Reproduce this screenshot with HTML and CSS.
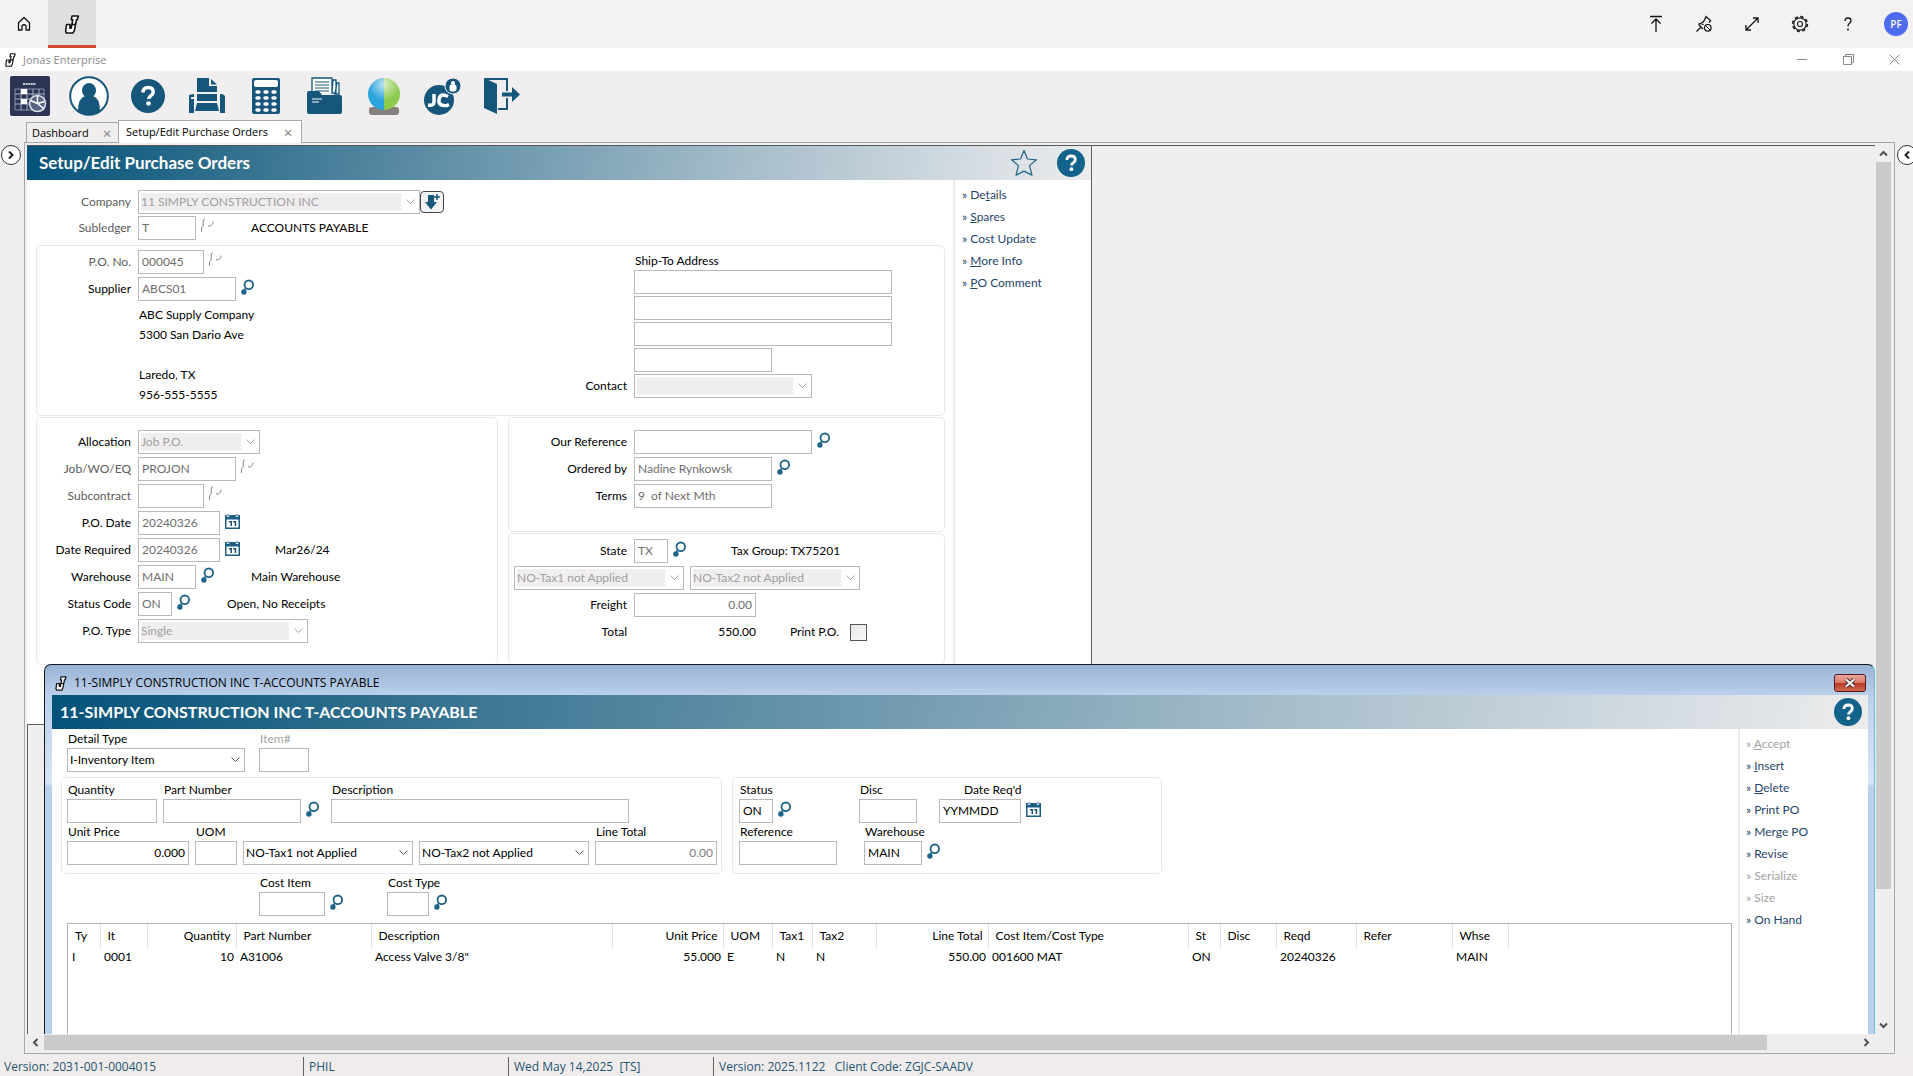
FILE: index.html
```html
<!DOCTYPE html>
<html lang="en">
<head>
<meta charset="utf-8">
<title>Jonas Enterprise</title>
<link rel="stylesheet" href="styles.css">
</head>
<body>
<svg class="defs" aria-hidden="true">
  <symbol id="jonas" viewBox="0 0 14 18"><path d="M7 1h6l-1 3.500h-.8L9.300 14.500 8 17H1.500L1 15.500 1.800 9h3.400L5 12.500h1.200L7.800 4.500H6.300z" fill="#fff" stroke="#111" stroke-width="1.500" stroke-linejoin="round"/><path d="M7 9h3.500" stroke="#111" stroke-width="1.500"/></symbol>
  <symbol id="find" viewBox="0 0 13 16"><circle cx="7.800" cy="5.800" r="4.300" fill="none" stroke="#1d6488" stroke-width="1.800"/><path d="M4.500 9.500 3.200 11" stroke="#1d6488" stroke-width="1.600"/><circle cx="2.900" cy="13" r="2.700" fill="#1d6488"/></symbol>
  <symbol id="nofind" viewBox="0 0 13 16"><path d="M4 1Q2.200.8 2.200 3v5L.5 9.800V14M12 3.500v2L9.500 7.800H7" fill="none" stroke="#8a8a8a" stroke-width="1"/></symbol>
  <symbol id="cal" viewBox="0 0 15 15"><path d="M0 1h15v14H0z" fill="#1d5f83"/><path d="M1.500 5.500h12V13.500h-12z" fill="#fff"/><path d="M3 0v3M12 0v3" stroke="#fff" stroke-width="2.400"/><path d="M3 0v2.500M12 0v2.500" stroke="#1d5f83" stroke-width="1"/><path d="M4 7h3v5H5.500V8.500H4zM8.200 7h3v5H9.700V8.500H8.200z" fill="#1d4f6e"/></symbol>
  <symbol id="help" viewBox="0 0 34 34"><circle cx="17" cy="17" r="17" fill="currentColor"/><path d="M12 13.500q0-5 5.200-5 5 0 5 4.300 0 2.400-2.300 3.900-2.300 1.400-2.300 3.300" fill="none" stroke="#fff" stroke-width="3.400"/><circle cx="17.500" cy="24.500" r="2.300" fill="#fff"/></symbol>
</svg>

<header class="host">
  <nav class="host-tabs">
    <button class="host-tab" aria-label="Home"><svg width="14" height="16" viewBox="0 0 14 16"><path d="M1.500 6.800 7 1.500l5.500 5.300V14H9V9.500q-2-1.500-4 0V14H1.500z" fill="none" stroke="#111" stroke-width="1.300" stroke-linejoin="round"/></svg></button>
    <button class="host-tab current" aria-label="Jonas"><svg width="16" height="19"><use href="#jonas"/></svg></button>
  </nav>
  <div class="host-tools">
    <button aria-label="Upload"><svg width="16" height="18" viewBox="0 0 16 18"><path d="M2 1.500h12M8 17V4M3.500 8.500 8 4l4.500 4.500" fill="none" stroke="#111" stroke-width="1.300"/></svg></button>
    <button aria-label="Unpin"><svg width="18" height="18" viewBox="0 0 18 18"><path d="M1.500 16.500 6 12M3.500 9.500q2.500-2 5 .2M3.500 9.500 8 14M5.500 8.500Q8.500 7.500 9.500 5l1.500-3.500 4.500 4-1.500 2" fill="none" stroke="#111" stroke-width="1.300"/><circle cx="12.800" cy="12.800" r="3.300" fill="none" stroke="#111" stroke-width="1.200"/><path d="m10.500 10.500 4.600 4.600" stroke="#111"/></svg></button>
    <button aria-label="Expand"><svg width="16" height="16" viewBox="0 0 16 16"><path d="m2 14 12-12M9 2h5v5M2 9v5h5" fill="none" stroke="#111" stroke-width="1.300"/></svg></button>
    <button aria-label="Settings"><svg width="18" height="18" viewBox="0 0 18 18"><circle cx="9" cy="9" r="7.300" fill="none" stroke="#222" stroke-width="1.800" stroke-dasharray="3.300 2.430"/><circle cx="9" cy="9" r="6.200" fill="none" stroke="#222" stroke-width="1.200"/><circle cx="9" cy="9" r="2.500" fill="none" stroke="#222" stroke-width="1.200"/></svg></button>
    <button aria-label="Help"><svg width="10" height="14" viewBox="0 0 10 14"><path d="M2 4q0-3 3-3t3 2.700Q8 5.500 6 6.700 5 7.500 5 9.500" fill="none" stroke="#111" stroke-width="1.300"/><circle cx="5" cy="12.500" r=".9"/></svg></button>
    <button class="avatar">PF</button>
  </div>
</header>

<div class="titlebar">
  <svg width="11" height="14"><use href="#jonas"/></svg>
  <span>Jonas Enterprise</span>
  <div class="wincontrols">
    <button aria-label="Minimize"><svg width="11" height="11" viewBox="0 0 11 11"><path d="M0 5.500h10" stroke="#888"/></svg></button>
    <button aria-label="Restore"><svg width="11" height="11" viewBox="0 0 11 11"><path d="M.5 2.500h8v8h-8zM2.500 2.500v-2h8v8h-2" fill="none" stroke="#888"/></svg></button>
    <button aria-label="Close"><svg width="11" height="11" viewBox="0 0 11 11"><path d="m.5.5 10 10M10.500.5l-10 10" stroke="#888"/></svg></button>
  </div>
</div>

<div class="toolbar">
  <button aria-label="Dashboard"><svg width="40" height="40" viewBox="0 0 40 40"><rect width="40" height="40" rx="2" fill="#2b3453"/><path d="M13 8h13" stroke="#c9cfdd" stroke-width="2" stroke-dasharray="2 .6"/><path d="M5 13h29v21H5z" fill="none" stroke="#8490ad"/><path d="M5 18h29M5 23h29M5 28h29M11 13v21M17 13v21M23 13v21M29 13v21" stroke="#a9b2c8"/><path d="M11 13h6v5h-6zM11 23h6v5h-6z" fill="#fff"/><circle cx="27.500" cy="27.500" r="8" fill="#5a6684" stroke="#dfe4ee" stroke-width="1.500"/><path d="M27.500 27.500V20M27.500 27.500l-7-3M27.500 27.500l6 5M27.500 27.500l7-2" stroke="#fff" stroke-width="1.500"/></svg></button>
  <button aria-label="User"><svg width="40" height="40" viewBox="0 0 40 40"><circle cx="20" cy="20" r="18.800" fill="#fff" stroke="#15567a" stroke-width="2"/><ellipse cx="20" cy="14.500" rx="7" ry="7.500" fill="#15567a"/><path d="M9 35q0-13 7-15h8q7 2 7 15-5 4-11 4T9 35z" fill="#15567a"/></svg></button>
  <button aria-label="Help"><svg width="34" height="34" color="#15567a"><use href="#help"/></svg></button>
  <button aria-label="Print"><svg width="36" height="36" viewBox="0 0 36 36"><path d="M8 0h12v8h8v6H8zM22 1l6 5.500h-6zM8 16h20v7H8zM0 17l5-1v3H2v2h3v14H0zM31 16q5 0 5 3v16h-5zM8 25h20l2 8H6z" fill="#15567a"/></svg></button>
  <button aria-label="Calculator"><svg width="28" height="36" viewBox="0 0 28 36"><rect width="28" height="36" rx="2" fill="#15567a"/><rect x="2" y="2" width="24" height="7" rx="2" fill="#fff"/><path d="M5 14h2M5 20h2M5 26h2M5 32h2M13 14h2M13 20h2M13 26h2M13 32h2M21 14h2M21 20h2M21 26h2M21 32h2" stroke="#fff" stroke-linecap="round" stroke-width="3.400"/></svg></button>
  <button aria-label="Documents"><svg width="36" height="38" viewBox="0 0 36 38"><path d="M30 6h2v11h-4zM26 3h3v13h-4zM5 16V1h20v15" fill="#fff" stroke="#15567a" stroke-width="1.300"/><path d="M8 5h14M8 8h14M8 11h14M8 14h14" stroke="#15567a"/><path d="M2 14h10l3 4h18q2 0 2 2v15q0 2-2 2H2q-2 0-2-2V16q0-2 2-2z" fill="#15567a"/><path d="M5 22h10M5 25h7" stroke="#fff" stroke-width="1.200"/></svg></button>
  <button aria-label="Web"><svg width="34" height="38" viewBox="0 0 34 38"><defs><radialGradient id="globe" cx=".5" cy=".2"><stop offset="0" stop-color="#fff" stop-opacity=".7"/><stop offset="1" stop-color="#fff" stop-opacity="0"/></radialGradient></defs><rect x="2" y="30" width="30" height="8" rx="3" fill="#85807e"/><path d="M17 1a16 16 0 0 0 0 32z" fill="#2ba3dc"/><path d="M17 1a16 16 0 0 1 0 32z" fill="#8ccb4d"/><circle cx="17" cy="17" r="16" fill="url(#globe)"/></svg></button>
  <button aria-label="Job costing"><svg width="38" height="38" viewBox="0 0 38 38"><circle cx="15" cy="23" r="15" fill="#15567a"/><path d="M10 17v8q0 4-6 3M24 19.500q-8-4-9 3t8 6l2-1" fill="none" stroke="#fff" stroke-width="3.500"/><circle cx="29" cy="9" r="8" fill="#15567a" stroke="#f0eeef"/><circle cx="29" cy="6" r="2" fill="#fff"/><rect x="25.500" y="7.500" width="7" height="7" rx="2" fill="#fff"/></svg></button>
  <button aria-label="Exit"><svg width="36" height="36" viewBox="0 0 36 36"><path d="M1 1h22v12M23 20v11h-9" fill="none" stroke="#15567a" stroke-width="2"/><path d="m0 0 13 6v30L0 30z" fill="#15567a"/><path d="M18 14.500h10V9l8 7.500-8 7.500v-5.500H18z" fill="#15567a"/></svg></button>
</div>

<div class="doc-tabs">
  <div class="doc-tab"><a href="#">Dashboard</a><button aria-label="Close Dashboard">×</button></div>
  <div class="doc-tab active"><a href="#">Setup/Edit Purchase Orders</a><button aria-label="Close Purchase Orders">×</button></div>
</div>

<main class="workspace">
  <div class="gutter"><button class="fold" aria-label="Show left panel"><svg width="8" height="8" viewBox="0 0 8 8"><path d="m2 .5 3.500 3.500L2 7.500" fill="none" stroke="#222" stroke-width="2"/></svg></button></div>
  <div class="client">
    <div class="desktop">

      <section class="window po">
        <div class="banner">
          <h1>Setup/Edit Purchase Orders</h1>
          <button aria-label="Favourite"><svg width="28" height="28" viewBox="0 0 28 28"><path d="M14 1.500 17.500 10l9 .8-7 5.800 2.500 9.500-8-4-8 4 2.500-9.500-7-5.800 9-.8z" fill="none" stroke="#1d6488" stroke-width="1.200" stroke-linejoin="round"/></svg></button>
          <button aria-label="Help"><svg width="28" height="28" color="#11638c"><use href="#help"/></svg></button>
        </div>
        <div class="window-body">
          <div class="po-form">
            <div class="rows top-rows">
              <div class="row dim"><label for="company">Company</label><select id="company" class="w282" disabled><option>11 SIMPLY CONSTRUCTION INC</option></select><button class="add" aria-label="Add company"><svg width="16" height="16" viewBox="0 0 16 16"><path d="M4 1h6v7h3l-6 7.500L1 8h3z" fill="#15567a"/><path d="M13 0v6M10 3h6" stroke="#15567a" stroke-width="1.500"/></svg></button></div>
              <div class="row dim"><label for="subledger">Subledger</label><input id="subledger" class="w58" value="T"><span class="pick"><svg><use href="#nofind"/></svg></span><output>ACCOUNTS PAYABLE</output></div>
            </div>

            <div class="group ship">
              <div class="rows left">
                <div class="row dim"><label for="pono">P.O. No.</label><input id="pono" class="w66" value="000045"><span class="pick"><svg><use href="#nofind"/></svg></span></div>
                <div class="row"><label for="supplier">Supplier</label><input id="supplier" class="w98" value="ABCS01"><button class="pick" aria-label="Find supplier"><svg><use href="#find"/></svg></button></div>
                <address>ABC Supply Company<br>5300 San Dario Ave<br><br>Laredo, TX<br>956-555-5555</address>
              </div>
              <div class="rows right ship-rows">
                <label class="ship-label" for="ship1">Ship-To Address</label>
                <div class="row"><label></label><input id="ship1" class="w258"></div>
                <div class="row"><label></label><input aria-label="Ship-to line 2" class="w258"></div>
                <div class="row"><label></label><input aria-label="Ship-to line 3" class="w258"></div>
                <div class="row"><label></label><input aria-label="Ship-to line 4" class="w138"></div>
                <div class="row"><label for="contact">Contact</label><select id="contact" class="w178" disabled><option></option></select></div>
              </div>
            </div>

            <div class="halves">
              <div class="group rows left tall">
                <div class="row"><label for="alloc">Allocation</label><select id="alloc" class="w122" disabled><option>Job P.O.</option></select></div>
                <div class="row dim"><label for="job">Job/WO/EQ</label><input id="job" class="w98" value="PROJON"><span class="pick"><svg><use href="#nofind"/></svg></span></div>
                <div class="row dim"><label for="subc">Subcontract</label><input id="subc" class="w66"><span class="pick"><svg><use href="#nofind"/></svg></span></div>
                <div class="row"><label for="podate">P.O. Date</label><input id="podate" class="w82" value="20240326"><button class="pick" aria-label="Pick P.O. date"><svg class="cal"><use href="#cal"/></svg></button></div>
                <div class="row"><label for="reqdate">Date Required</label><input id="reqdate" class="w82" value="20240326"><button class="pick" aria-label="Pick required date"><svg class="cal"><use href="#cal"/></svg></button><output>Mar26/24</output></div>
                <div class="row"><label for="whse">Warehouse</label><input id="whse" class="w58" value="MAIN"><button class="pick" aria-label="Find warehouse"><svg><use href="#find"/></svg></button><output>Main Warehouse</output></div>
                <div class="row"><label for="status">Status Code</label><input id="status" class="w34" value="ON"><button class="pick" aria-label="Find status"><svg><use href="#find"/></svg></button><output>Open, No Receipts</output></div>
                <div class="row"><label for="potype">P.O. Type</label><select id="potype" class="w170" disabled><option>Single</option></select></div>
              </div>
              <div class="stack">
                <div class="group rows right reference">
                  <div class="row"><label for="ourref">Our Reference</label><input id="ourref" class="w178"><button class="pick" aria-label="Find reference"><svg><use href="#find"/></svg></button></div>
                  <div class="row"><label for="orderedby">Ordered by</label><input id="orderedby" class="w138" value="Nadine Rynkowsk"><button class="pick" aria-label="Find person"><svg><use href="#find"/></svg></button></div>
                  <div class="row"><label for="terms">Terms</label><input id="terms" class="w138" value="9  of Next Mth"></div>
                </div>
                <div class="group rows right totals">
                  <div class="row"><label for="state">State</label><input id="state" class="w34" value="TX"><button class="pick" aria-label="Find state"><svg><use href="#find"/></svg></button><output class="wide">Tax Group: TX75201</output></div>
                  <div class="row taxes"><select aria-label="Tax 1" class="w170" disabled><option>NO-Tax1 not Applied</option></select><select aria-label="Tax 2" class="w170" disabled><option>NO-Tax2 not Applied</option></select></div>
                  <div class="row"><label for="freight">Freight</label><input id="freight" class="w122 num" value="0.00"></div>
                  <div class="row"><label>Total</label><output class="w122 num">550.00</output><label class="print" for="printpo">Print P.O.</label><input id="printpo" type="checkbox"></div>
                </div>
              </div>
            </div>
          </div>
          <nav class="actions">
            <a href="#">De<u>t</u>ails</a><a href="#"><u>S</u>pares</a><a href="#">Cost Update</a><a href="#"><u>M</u>ore Info</a><a href="#"><u>P</u>O Comment</a>
          </nav>
        </div>
      </section>

      <section class="window blank"></section>

      <section class="window dialog">
        <div class="caption">
          <svg width="14" height="15"><use href="#jonas"/></svg>
          <span>11-SIMPLY CONSTRUCTION INC T-ACCOUNTS PAYABLE</span>
          <button class="close" aria-label="Close"><svg width="12" height="10" viewBox="0 0 12 10"><path d="m2 1.500 8 7M10 1.500l-8 7" stroke="#43232b" stroke-width="4"/><path d="m2 1.500 8 7M10 1.500l-8 7" stroke="#fff" stroke-width="2.200"/></svg></button>
        </div>
        <div class="banner">
          <h2>11-SIMPLY CONSTRUCTION INC T-ACCOUNTS PAYABLE</h2>
          <button aria-label="Help"><svg width="28" height="28" color="#11638c"><use href="#help"/></svg></button>
        </div>
        <div class="window-body">
          <div class="line-form">
            <div class="cells inset">
              <div class="cell"><label for="dtype">Detail Type</label><select id="dtype" class="w178"><option>I-Inventory Item</option></select></div>
              <div class="cell after-type"><label class="off" for="item">Item#</label><input id="item" class="w50"></div>
            </div>
            <div class="boxes">
              <div class="group box">
                <div class="cells">
                  <div class="cell"><label for="qty">Quantity</label><input id="qty" class="w90"></div>
                  <div class="cell"><label for="part">Part Number</label><div class="with-pick"><input id="part" class="w138"><button class="pick narrow" aria-label="Find part"><svg><use href="#find"/></svg></button></div></div>
                  <div class="cell"><label for="desc">Description</label><input id="desc" class="w298"></div>
                </div>
                <div class="cells">
                  <div class="cell"><label for="price">Unit Price</label><input id="price" class="w122 num" value="0.000"></div>
                  <div class="cell"><label for="uom">UOM</label><input id="uom" class="w42"></div>
                  <div class="cell"><label></label><select aria-label="Line tax 1" class="w170"><option>NO-Tax1 not Applied</option></select></div>
                  <div class="cell"><label></label><select aria-label="Line tax 2" class="w170"><option>NO-Tax2 not Applied</option></select></div>
                  <div class="cell"><label for="ltotal">Line Total</label><input id="ltotal" class="w122 num gray" value="0.00"></div>
                </div>
              </div>
              <div class="group box state-box">
                <div class="cells spaced">
                  <div class="cell c120"><label for="lstatus">Status</label><div class="with-pick"><input id="lstatus" class="w34" value="ON"><button class="pick narrow" aria-label="Find line status"><svg><use href="#find"/></svg></button></div></div>
                  <div class="cell c80"><label for="disc">Disc</label><input id="disc" class="w58"></div>
                  <div class="cell"><label class="shift" for="dreq">Date Req'd</label><div class="with-pick"><input id="dreq" class="w82" value="YYMMDD"><button class="pick narrow" aria-label="Pick line date"><svg class="cal"><use href="#cal"/></svg></button></div></div>
                </div>
                <div class="cells spaced">
                  <div class="cell c125"><label for="lref">Reference</label><input id="lref" class="w98"></div>
                  <div class="cell"><label for="lwhse">Warehouse</label><div class="with-pick"><input id="lwhse" class="w58" value="MAIN"><button class="pick narrow" aria-label="Find line warehouse"><svg><use href="#find"/></svg></button></div></div>
                </div>
              </div>
            </div>
            <div class="cells costs">
              <div class="cell c128"><label for="citem">Cost Item</label><div class="with-pick"><input id="citem" class="w66"><button class="pick narrow" aria-label="Find cost item"><svg><use href="#find"/></svg></button></div></div>
              <div class="cell"><label for="ctype">Cost Type</label><div class="with-pick"><input id="ctype" class="w42"><button class="pick narrow" aria-label="Find cost type"><svg><use href="#find"/></svg></button></div></div>
            </div>
            <div class="list">
              <table>
                <colgroup><col class="k32"><col class="k47"><col class="k89"><col class="k135"><col class="k241"><col class="k111"><col class="k49"><col class="k40"><col class="k64"><col class="k112"><col class="k200"><col class="k32"><col class="k56"><col class="k80"><col class="k96"><col class="k56"></colgroup>
                <thead><tr><th>Ty</th><th>It</th><th class="num">Quantity</th><th>Part Number</th><th>Description</th><th class="num">Unit Price</th><th>UOM</th><th>Tax1</th><th>Tax2</th><th class="num">Line Total</th><th>Cost Item/Cost Type</th><th>St</th><th>Disc</th><th>Reqd</th><th>Refer</th><th>Whse</th></tr></thead>
                <tbody><tr><td>I</td><td>0001</td><td class="num">10</td><td>A31006</td><td>Access Valve 3/8"</td><td class="num">55.000</td><td>E</td><td>N</td><td>N</td><td class="num">550.00</td><td>001600 MAT</td><td>ON</td><td></td><td>20240326</td><td></td><td>MAIN</td></tr></tbody>
              </table>
            </div>
          </div>
          <nav class="actions">
            <a href="#" class="off"><u>A</u>ccept</a><a href="#"><u>I</u>nsert</a><a href="#"><u>D</u>elete</a><a href="#">Print PO</a><a href="#">Merge PO</a><a href="#">Revise</a><a href="#" class="off">Serialize</a><a href="#" class="off">Size</a><a href="#">On Hand</a>
          </nav>
        </div>
      </section>
    </div>

    <div class="vbar">
      <button aria-label="Scroll up"><svg width="9" height="7" viewBox="0 0 9 7"><path d="m1 5.500 3.500-3.500L8 5.500" fill="none" stroke="#505050" stroke-width="2"/></svg></button>
      <div class="track"><div class="thumb"></div></div>
      <button aria-label="Scroll down"><svg width="9" height="7" viewBox="0 0 9 7"><path d="m1 1.500 3.500 3.500L8 1.500" fill="none" stroke="#505050" stroke-width="2"/></svg></button>
    </div>
    <div class="hbar">
      <button aria-label="Scroll left"><svg width="7" height="9" viewBox="0 0 7 9"><path d="M5.500 1 2 4.500 5.500 8" fill="none" stroke="#505050" stroke-width="2"/></svg></button>
      <div class="track"><div class="thumb"></div></div>
      <button aria-label="Scroll right"><svg width="7" height="9" viewBox="0 0 7 9"><path d="M1.500 1 5 4.500 1.500 8" fill="none" stroke="#505050" stroke-width="2"/></svg></button>
    </div>
  </div>
  <div class="gutter end"><button class="fold" aria-label="Show right panel"><svg width="8" height="8" viewBox="0 0 8 8"><path d="M6 .5 2.500 4 6 7.500" fill="none" stroke="#222" stroke-width="2"/></svg></button></div>
</main>

<footer class="status">
  <span>Version: 2031-001-0004015</span><span>PHIL</span><span>Wed May 14,2025&nbsp; [TS]</span><span>Version: 2025.1122 &nbsp; Client Code: ZGJC-SAADV</span>
</footer>
</body>
</html>
```
FILE: styles.css
```css
* { box-sizing: border-box; }
body {
  margin: 0;
  height: 100vh;
  display: flex;
  flex-direction: column;
  overflow: hidden;
  background: #f0eeef;
  color: #000;
  font: 12px/16px Lato, "Noto Sans", sans-serif;
}
button { border: 0; padding: 0; background: none; font: inherit; color: inherit; display: flex; align-items: center; justify-content: center; }
svg { display: block; flex: none; }
a { color: inherit; text-decoration: none; }
.defs { position: absolute; width: 0; height: 0; }

/* remote host bar */
.host { flex: none; height: 48px; display: flex; justify-content: space-between; background: #f3f2f1; }
.host-tabs { display: flex; }
.host-tab { width: 48px; border-bottom: 3px solid transparent; border-top: 3px solid transparent; }
.host-tab.current { background: #e0dfde; border-bottom-color: #d24a2c; border-top-color: #e0dfde; }
.host-tools { display: flex; align-items: center; padding-right: 5px; }
.host-tools button { width: 48px; height: 48px; }
.host-tools .avatar { width: 24px; height: 24px; margin-left: 12px; border-radius: 50%; background: #4f6bed; color: #fff; font: 600 10px/24px "Open Sans", sans-serif; }

.titlebar { flex: none; height: 23px; display: flex; align-items: center; gap: 7px; padding-left: 5px; background: #fff; color: #8a8a8a; font: 11px/23px "Open Sans", sans-serif; }
.wincontrols { margin-left: auto; display: flex; }
.wincontrols button { width: 46px; }
.wincontrols button:last-child { margin-right: -4px; }

.toolbar { flex: none; height: 49px; display: flex; align-items: center; gap: 18px; padding: 0 9px; }
.toolbar button { width: 41px; height: 44px; }

/* document tabs */
.doc-tabs { flex: none; height: 22px; display: flex; align-items: flex-end; padding-left: 26px; font: 11px/18px "Open Sans", sans-serif; position: relative; z-index: 1; }
.doc-tab { display: flex; align-items: center; justify-content: space-between; width: 92px; height: 20px; padding: 0 4px 0 5px; border: 1px solid #a8a8a8; border-bottom: 0; border-right: 0; }
.doc-tab button { width: 14px; color: #808080; font-size: 15px; line-height: 16px; }
.doc-tab.active { width: 184px; height: 23px; padding: 0 6px 0 7px; margin-bottom: -1px; border-right: 1px solid #a8a8a8; background: #fff; }

.workspace { flex: 1; min-height: 0; display: flex; }
.gutter { flex: none; width: 24px; padding: 3px 1px; }
.gutter.end { width: 18px; padding-left: 2px; overflow: hidden; }
.fold { width: 20px; height: 20px; border: 1px solid #333; border-radius: 50%; background: #fff; }
.client { flex: 1; min-width: 0; display: grid; grid-template: minmax(0, 1fr) 16px / minmax(0, 1fr) 16px; padding: 2px 3px 3px 2px; border: 1px solid #a8a8a8; }
.desktop { position: relative; overflow: hidden; border-top: 1px solid #55595a; }

/* scroll bars */
.vbar, .hbar { display: flex; }
.vbar { flex-direction: column; padding-left: 1px; }
.hbar { padding-top: 1px; }
.vbar button { height: 17px; }
.hbar button { width: 17px; }
.track { flex: 1; }
.thumb { background: #cbcbcb; }
.vbar .thumb { height: 85%; }
.hbar .thumb { width: 95%; height: 15px; }

/* windows */
.window { position: absolute; background: #fff; }
.po { left: 0; top: 0; width: 1065px; height: 578px; border-right: 1px solid #606060; }
.blank { left: 0; right: 0; top: 578px; bottom: 0; background: #f0eeef; border: solid #606060; border-width: 1px 0 0 1px; }
.dialog { left: 17px; right: 0; top: 518px; bottom: -8px; padding: 0 6px 0 7px; border: solid #16181c; border-width: 1px 0 0 1px; border-right: 1px solid #5ec4d4; border-radius: 7px 7px 0 0; background: linear-gradient(#98b3d6, #bad0ea 30px, #d6e4f6 118px, #b9d1ea 122px); display: flex; flex-direction: column; }
.banner { flex: none; height: 34px; display: flex; align-items: center; gap: 19px; padding: 0 6px 1px 12px; color: #fff; background: linear-gradient(100deg, #04527a, #2c6c8b 17%, #7ba1b5 50%, #a3bbc8 66%, #d3dbe2 88%, #ececec); }
.banner h1, .banner h2 { margin: 0 auto 0 0; font: bold 17px/20px Lato, sans-serif; }
.banner h2 { font-size: 16px; }
.dialog .banner { padding-left: 8px; }
.caption { flex: none; height: 30px; display: flex; align-items: center; gap: 6px; padding: 6px 2px 0 2px; font: 12px/16px "Open Sans", sans-serif; }
.close { margin-left: auto; width: 32px; height: 18px; border: 1px solid #5b1419; border-radius: 3px; background: linear-gradient(#e9a79d, #d9796a 48%, #bc3a25 52%, #d06a51); }
.window-body { flex: 1; display: flex; min-height: 0; }
.dialog .window-body { background: #fff; }
.actions { flex: none; width: 138px; padding: 4px 0 0 7px; border-left: 2px solid #ebebec; color: #1f4468; line-height: 22px; }
.dialog .actions { width: 130px; padding-left: 6px; }
.actions a { display: block; }
.actions a::before { content: "» "; }
.off, .actions .off { color: #a3a3a3; }

/* shared controls */
.group { border: 1px solid #e9e8ea; border-radius: 5px; }
input, select { height: 24px; margin: 0; padding: 0 3px 2px; border: 1px solid #b9b9bb; border-radius: 0; background: #fff; color: #6e6e6e; font: inherit; }
select { appearance: none; padding: 0 22px 0 2px; background: #fff url("data:image/svg+xml,%3Csvg xmlns='http://www.w3.org/2000/svg' width='9' height='6'%3E%3Cpath d='m.5.5 4 4 4-4' fill='none' stroke='%23555'/%3E%3C/svg%3E") right 4px center no-repeat; }
select:disabled { color: #a0a0a0; opacity: 1; background: url("data:image/svg+xml,%3Csvg xmlns='http://www.w3.org/2000/svg' width='9' height='6'%3E%3Cpath d='m.5.5 4 4 4-4' fill='none' stroke='%23aaa'/%3E%3C/svg%3E") right 4px center no-repeat, linear-gradient(#f0eeef, #f0eeef) 2px 2px / calc(100% - 20px) calc(100% - 4px) no-repeat #fff; }
.dialog input, .dialog select { color: #000; }
.dialog input.gray { color: #808080; }
.num { text-align: right; }
.pick { flex: none; width: 55px; height: 24px; padding-left: 5px; justify-content: flex-start; display: flex; align-items: center; }
.pick svg { width: 13px; height: 18px; margin-bottom: 4px; }
.pick .cal { width: 15px; height: 15px; }
.pick.narrow { width: 24px; }
.w34 { width: 34px; } .w42 { width: 42px; } .w50 { width: 50px; } .w58 { width: 58px; }
.w66 { width: 66px; } .w82 { width: 82px; } .w90 { width: 90px; } .w98 { width: 98px; }
.w122 { width: 122px; } .w138 { width: 138px; } .w170 { width: 170px; } .w178 { width: 178px; }
.w258 { width: 258px; } .w282 { width: 282px; } .w298 { width: 298px; }

/* purchase order form */
.po-form { flex: 1; padding: 10px 8px 0 9px; }
.rows { display: flex; flex-direction: column; gap: 3px; }
.row { display: flex; align-items: center; height: 24px; }
.row > label { flex: none; width: 95px; margin-right: 6px; padding-right: 1px; text-align: right; }
.right .row > label { width: 119px; }
.dim > label { color: #5c5c5c; }
.top-rows { gap: 2px; padding-left: 1px; height: 55px; }
.add { width: 24px; height: 22px; border: 1px solid #444; border-radius: 4px; background: #f3f2f5; }
.ship { display: flex; height: 171px; padding-top: 4px; }
.ship .left { width: 472px; }
.ship-rows { gap: 2px; }
.ship-label { height: 18px; padding: 3px 0 0 126px; }
address { padding: 1px 0 0 102px; font-style: normal; line-height: 20px; }
.halves { display: flex; gap: 10px; margin-top: 1px; }
.tall { width: 462px; height: 248px; padding-top: 12px; }
.stack { flex: 1; display: flex; flex-direction: column; gap: 1px; }
.reference { height: 115px; padding-top: 12px; }
.totals { height: 132px; padding-top: 5px; }
.taxes { gap: 6px; padding-left: 5px; }
.wide { padding-left: 8px; }
.row > .print { width: 52px; margin: 0 10px 0 32px; }
.right .row > .print { width: 52px; }
input[type="checkbox"] { appearance: none; width: 17px; height: 17px; padding: 0; border-color: #555; background: linear-gradient(135deg, #e6e4e8, #fafafa); }

/* line entry dialog */
.line-form { flex: 1; min-width: 0; display: flex; flex-direction: column; padding: 2px 6px 0 9px; }
.cells { display: flex; gap: 6px; }
.cell { display: flex; flex-direction: column; }
.cell > label { height: 17px; padding-left: 1px; white-space: pre; }
.inset { padding-left: 6px; }
.after-type { padding-left: 8px; }
.with-pick { display: flex; }
.boxes { display: flex; gap: 10px; margin-top: 5px; }
.box { width: 661px; height: 97px; padding: 4px 4px 0 5px; display: flex; flex-direction: column; gap: 1px; }
.state-box { width: 430px; padding-left: 6px; }
.spaced { gap: 0; }
.c80 { width: 80px; } .c120 { width: 120px; } .c125 { width: 125px; } .c128 { width: 128px; }
.shift { margin-left: 24px; }
.costs { gap: 0; margin-top: 1px; padding-left: 198px; }
.list { flex: 1; margin: 7px 0 0 6px; border: 1px solid #b0b0b0; }
table { table-layout: fixed; width: 1440px; border-collapse: collapse; }
th, td { padding: 0 2px 0 4px; text-align: left; font-weight: normal; white-space: nowrap; }
th { height: 24px; padding: 0 5px 0 7px; border-right: 1px solid #e2e2e4; }
td { height: 18px; }
th.num, td.num { text-align: right; }
.k32 { width: 32px; } .k40 { width: 40px; } .k47 { width: 47px; } .k49 { width: 49px; } .k56 { width: 56px; }
.k64 { width: 64px; } .k80 { width: 80px; } .k89 { width: 89px; } .k96 { width: 96px; } .k111 { width: 111px; }
.k112 { width: 112px; } .k135 { width: 135px; } .k200 { width: 200px; } .k241 { width: 241px; }

/* status bar */
.status { flex: none; height: 19px; margin-top: 3px; display: flex; background: #f0ecec; color: #1f5470; font: 12px/20px "Open Sans", sans-serif; }
.status span { width: 205px; padding-left: 5px; border-left: 1px solid #606060; white-space: nowrap; }
.status span:first-child { width: 303px; padding-left: 4px; border-left: 0; }
.status span:last-child { width: auto; }
```
